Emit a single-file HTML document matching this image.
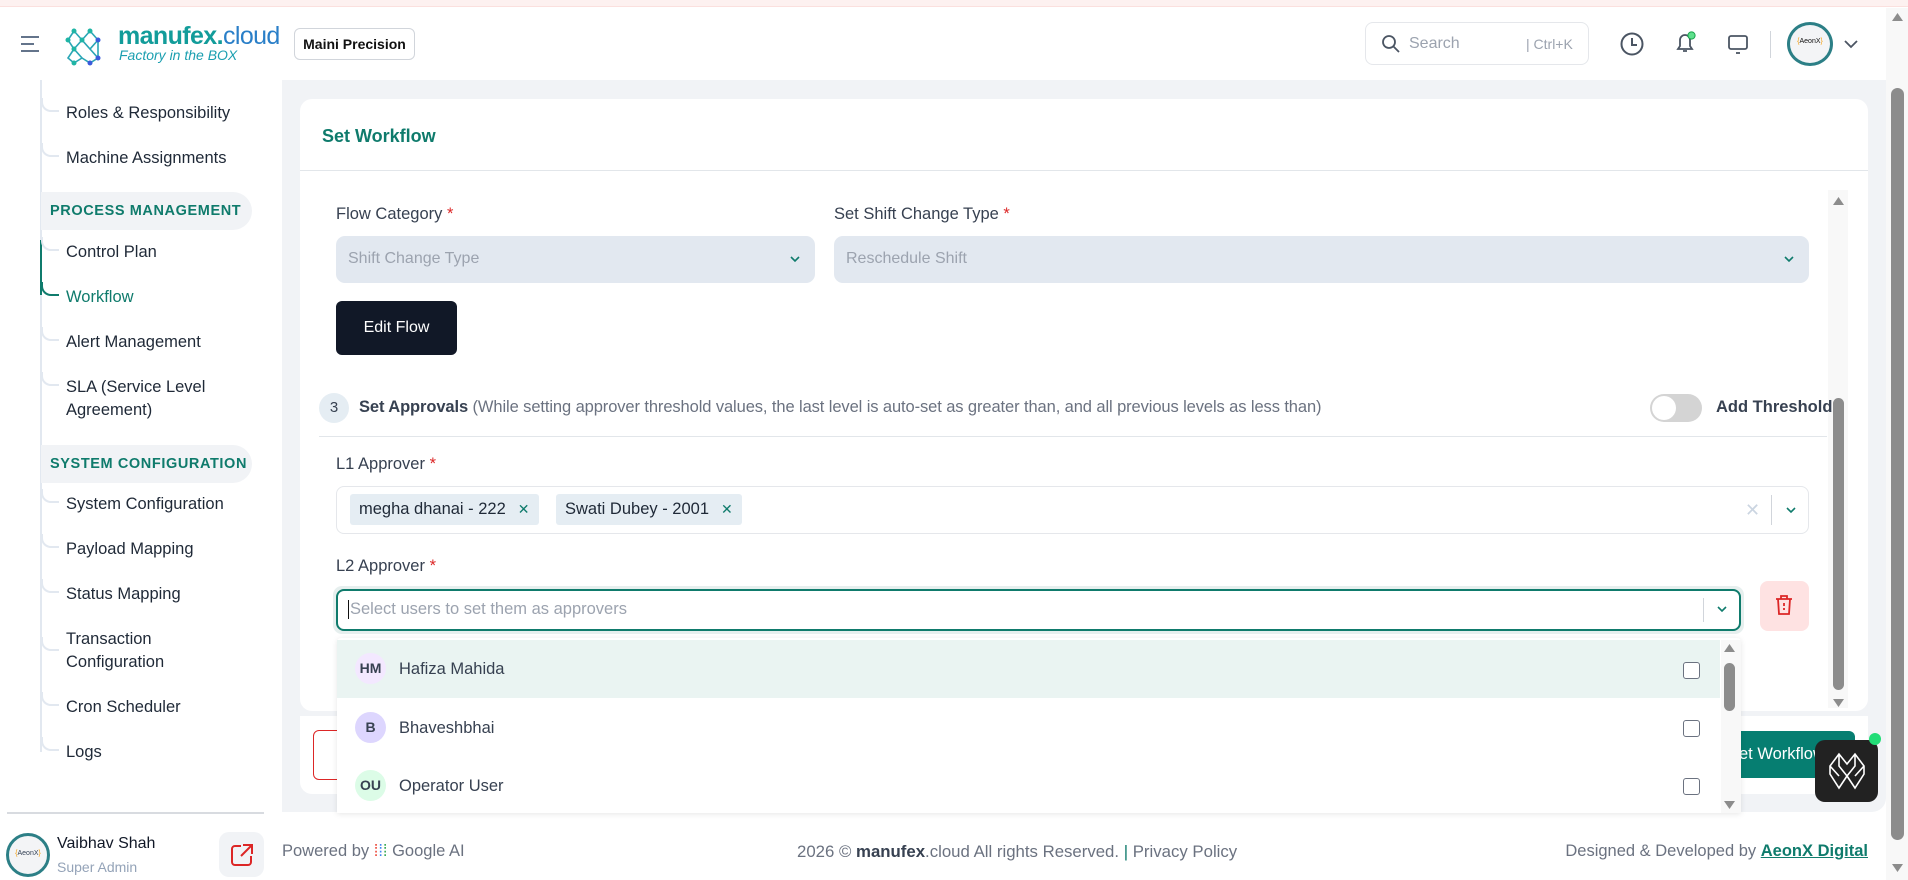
<!DOCTYPE html>
<html><head><meta charset="utf-8"><style>
*{box-sizing:border-box;margin:0;padding:0}
body{width:1908px;height:880px;overflow:hidden;background:#fff;font-family:"Liberation Sans",sans-serif;color:#334155;position:relative}
.a{position:absolute}
.sb a{position:absolute;left:66px;font-size:16.5px;color:#1f2937;line-height:23px;white-space:nowrap}
.tick{position:absolute;left:41px;width:18px;height:14px;border-left:2px solid #e2e8f0;border-bottom:2px solid #e2e8f0;border-bottom-left-radius:10px}
.pill{position:absolute;left:41px;width:211px;height:38px;background:#f1f3f6;border-radius:0 19px 19px 0;color:#0f7b6c;font-weight:bold;font-size:14.5px;letter-spacing:.6px;padding:11px 0 0 9px}
.lbl{position:absolute;font-size:16.5px;color:#374151}
.lbl b{color:#dc2626;font-weight:normal}
.sel{position:absolute;background:#e2e8f0;border-radius:9px;font-size:16px;color:#9ca3af;padding:14px 12px}
.chip{position:absolute;top:494px;height:31px;background:#e5edf3;border-radius:3px;font-size:16.5px;color:#1f2937;padding:6px 9px}
.chip span{color:#0f7b6c;margin-left:12px;font-size:14px}
.av{position:absolute;left:355px;width:31px;height:31px;border-radius:50%;font-size:14px;font-weight:bold;color:#374151;text-align:center;line-height:31px}
.nm{position:absolute;left:399px;font-size:16.5px;color:#374151}
.cb{position:absolute;left:1683px;width:17px;height:17px;border:1.5px solid #6b7280;border-radius:3px;background:#fff}
</style></head><body>
<div class="a" style="left:0;top:0;width:1908px;height:7px;background:#fdf1f0;border-bottom:1px solid #fbe0de"></div>
<svg class="a" style="left:20px;top:35px" width="20" height="18"><path d="M1 2h18M1 9h13M1 16h18" stroke="#64748b" stroke-width="2"/></svg>
<svg class="a" style="left:64px;top:26px" width="56" height="40"><g stroke="#2aa6b5" stroke-width="1.6" fill="none"><path d="M10 5L4 14L10 23L4 32L10 37M10 5L18 14L10 23L18 32L10 37M26 5L18 14L26 23L34 14L26 5M26 23L34 32L26 37L18 32M34 14V32"/></g><g fill="#1fb5a5"><circle cx="10" cy="5" r="2.5"/><circle cx="4" cy="14" r="2.5"/><circle cx="18" cy="14" r="2.5"/><circle cx="10" cy="23" r="2.5"/><circle cx="26" cy="5" r="2.5"/><circle cx="34" cy="14" r="2.5" fill="#3b5bdb"/><circle cx="26" cy="37" r="2.5" fill="#3b5bdb"/><circle cx="10" cy="37" r="2.5"/><circle cx="34" cy="32" r="2.5" fill="#3b5bdb"/></g></svg>
<div class="a" style="left:118px;top:22px;font-size:25px;color:#129c9a;font-weight:bold;letter-spacing:-.6px">manufex.<span style="font-weight:normal;color:#2a7fc8">cloud</span></div>
<div class="a" style="left:119px;top:47px;font-size:14px;color:#1b9fb0;font-style:italic">Factory in the BOX</div>
<div class="a" style="left:294px;top:28px;width:121px;height:32px;border:1px solid #d1d5db;border-radius:6px;font-size:14px;font-weight:bold;color:#111;text-align:center;line-height:30px">Maini Precision</div>
<div class="a" style="left:1365px;top:22px;width:224px;height:43px;border:1px solid #e5e7eb;border-radius:8px"></div>
<svg class="a" style="left:1381px;top:34px" width="20" height="20"><circle cx="8" cy="8" r="6" stroke="#4b5563" stroke-width="1.8" fill="none"/><path d="M12.5 12.5L18 18" stroke="#4b5563" stroke-width="1.8"/></svg>
<div class="a" style="left:1409px;top:35px;font-size:16px;color:#9ca3af">Search</div>
<div class="a" style="left:1526px;top:36px;font-size:14px;color:#9ca3af">| Ctrl+K</div>
<svg class="a" style="left:1619px;top:31px" width="26" height="26"><circle cx="13" cy="13" r="10.5" stroke="#4b5563" stroke-width="2" fill="none"/><path d="M13 7v7h5" stroke="#4b5563" stroke-width="2" fill="none"/></svg>
<svg class="a" style="left:1672px;top:30px" width="26" height="26"><path d="M6 19h14l-2-3v-6a5 5 0 0 0-10 0v6z M11 21h4" stroke="#4b5563" stroke-width="1.8" fill="none"/><circle cx="19.5" cy="5.5" r="3.6" fill="#5ee08c" stroke="#16a34a" stroke-width="1"/></svg>
<svg class="a" style="left:1726px;top:32px" width="24" height="24"><rect x="3" y="4" width="18" height="13" rx="2" stroke="#4b5563" stroke-width="1.8" fill="none"/><path d="M10 21h4" stroke="#4b5563" stroke-width="1.8"/></svg>
<div class="a" style="left:1770px;top:31px;width:1px;height:27px;background:#d1d5db"></div>
<div class="a" style="left:1787px;top:22px;width:46px;height:44px;border:3px solid #2c7f86;border-radius:50%;background:#f3f4f6;font-size:7px;text-align:center;line-height:34px;color:#111"><span style="color:#f59e0b">{</span>AeonX<span style="color:#f59e0b">}</span></div>
<svg class="a" style="left:1843px;top:38px" width="16" height="12"><path d="M2 3l6 6 6-6" stroke="#4b5563" stroke-width="1.8" fill="none"/></svg>
<div class="a" style="left:1886px;top:8px;width:22px;height:872px;background:#f8f8f8"></div>
<div class="a" style="left:1891px;top:88px;width:13px;height:752px;background:#8c8c8c;border-radius:7px"></div>
<svg class="a" style="left:1891px;top:12px" width="13" height="10"><path d="M6.5 1L12 9H1z" fill="#8c8c8c"/></svg>
<svg class="a" style="left:1891px;top:863px" width="13" height="10"><path d="M1 1h11L6.5 9z" fill="#8c8c8c"/></svg>
<div class="sb">
<div class="a" style="left:40px;top:80px;width:2px;height:672px;background:#e2e8f0"></div>
<div class="a" style="left:40px;top:240px;width:2px;height:55px;background:#0f7b6c"></div>
<div class="tick" style="top:98px"></div><a style="top:102px">Roles &amp; Responsibility</a>
<div class="tick" style="top:143px"></div><a style="top:147px">Machine Assignments</a>
<div class="pill" style="top:192px">PROCESS MANAGEMENT</div>
<div class="tick" style="top:237px"></div><a style="top:241px">Control Plan</a>
<div class="tick" style="top:282px;border-color:#0f7b6c"></div><a style="top:286px;color:#0f7b6c">Workflow</a>
<div class="tick" style="top:327px"></div><a style="top:331px">Alert Management</a>
<div class="tick" style="top:372px"></div><a style="top:376px">SLA (Service Level<br>Agreement)</a>
<div class="pill" style="top:445px">SYSTEM CONFIGURATION</div>
<div class="tick" style="top:489px"></div><a style="top:493px">System Configuration</a>
<div class="tick" style="top:534px"></div><a style="top:538px">Payload Mapping</a>
<div class="tick" style="top:579px"></div><a style="top:583px">Status Mapping</a>
<div class="tick" style="top:637px"></div><a style="top:628px">Transaction<br>Configuration</a>
<div class="tick" style="top:692px"></div><a style="top:696px">Cron Scheduler</a>
<div class="tick" style="top:737px"></div><a style="top:741px">Logs</a>
</div>
<div class="a" style="left:7px;top:812px;width:257px;height:2px;background:#d8dbe0"></div>
<div class="a" style="left:6px;top:833px;width:44px;height:44px;border:3px solid #2c7f86;border-radius:50%;background:#f3f4f6;font-size:7px;text-align:center;line-height:36px"><span style="color:#f59e0b">{</span>AeonX<span style="color:#f59e0b">}</span></div>
<div class="a" style="left:57px;top:835px;font-size:16px;color:#111827">Vaibhav Shah</div>
<div class="a" style="left:57px;top:859px;font-size:14px;color:#94a3b8">Super Admin</div>
<div class="a" style="left:219px;top:832px;width:45px;height:45px;background:#f1f3f6;border-radius:10px"></div>
<svg class="a" style="left:229px;top:842px" width="26" height="26"><path d="M12 4H6a3 3 0 0 0-3 3v13a3 3 0 0 0 3 3h13a3 3 0 0 0 3-3v-6M14 3h9v9M23 3L12 14" stroke="#dc2626" stroke-width="2" fill="none"/></svg>
<div class="a" style="left:282px;top:80px;width:1604px;height:732px;background:#f1f3f6;border-bottom-right-radius:14px"></div>
<div class="a" style="left:300px;top:99px;width:1568px;height:612px;background:#fff;border-radius:12px"></div>
<div class="a" style="left:322px;top:126px;font-size:18px;font-weight:bold;color:#0f7b6c">Set Workflow</div>
<div class="a" style="left:300px;top:170px;width:1568px;height:1px;background:#e2e6ea"></div>
<div class="a" style="left:1828px;top:190px;width:20px;height:518px;background:#f8f8f8"></div>
<svg class="a" style="left:1832px;top:196px" width="13" height="10"><path d="M6.5 1L12 9H1z" fill="#8c8c8c"/></svg>
<div class="a" style="left:1833px;top:398px;width:11px;height:292px;background:#8c8c8c;border-radius:6px"></div>
<svg class="a" style="left:1832px;top:698px" width="13" height="10"><path d="M1 1h11L6.5 9z" fill="#8c8c8c"/></svg>
<div class="lbl" style="left:336px;top:205px">Flow Category <b>*</b></div>
<div class="lbl" style="left:834px;top:205px">Set Shift Change Type <b>*</b></div>
<div class="sel" style="left:336px;top:236px;width:479px;height:47px">Shift Change Type</div>
<div class="sel" style="left:834px;top:236px;width:975px;height:47px">Reschedule Shift</div>
<svg class="a" style="left:789px;top:254px" width="12" height="10"><path d="M2 3l4 4 4-4" stroke="#0f7b6c" stroke-width="1.6" fill="none"/></svg>
<svg class="a" style="left:1783px;top:254px" width="12" height="10"><path d="M2 3l4 4 4-4" stroke="#0f7b6c" stroke-width="1.6" fill="none"/></svg>
<div class="a" style="left:336px;top:301px;width:121px;height:54px;background:#111827;border-radius:6px;color:#fff;font-size:16px;text-align:center;line-height:54px">Edit Flow</div>
<div class="a" style="left:319px;top:393px;width:30px;height:30px;border-radius:50%;background:#e5edf3;font-size:15px;text-align:center;line-height:30px;color:#374151">3</div>
<div class="a" style="left:359px;top:398px;font-size:16.5px;color:#6b7280;white-space:nowrap;letter-spacing:-.1px"><b style="color:#374151">Set Approvals</b> (While setting approver threshold values, the last level is auto-set as greater than, and all previous levels as less than)</div>
<div class="a" style="left:1650px;top:394px;width:52px;height:28px;border-radius:14px;background:#d4d4d4"><div style="margin:2px;width:24px;height:24px;border-radius:50%;background:#fff"></div></div>
<div class="a" style="left:1716px;top:398px;font-size:16.5px;font-weight:bold;color:#374151">Add Threshold</div>
<div class="a" style="left:319px;top:436px;width:1508px;height:1px;background:#e2e6ea"></div>
<div class="lbl" style="left:336px;top:455px">L1 Approver <b>*</b></div>
<div class="a" style="left:336px;top:486px;width:1473px;height:48px;border:1px solid #e5e7eb;border-radius:8px"></div>
<div class="chip" style="left:350px">megha dhanai - 222<span>✕</span></div>
<div class="chip" style="left:556px">Swati Dubey - 2001<span>✕</span></div>
<div class="a" style="left:1745px;top:500px;font-size:18px;color:#cbd5e1">✕</div>
<div class="a" style="left:1771px;top:495px;width:1px;height:30px;background:#d1d5db"></div>
<svg class="a" style="left:1785px;top:505px" width="12" height="10"><path d="M2 3l4 4 4-4" stroke="#0f7b6c" stroke-width="1.6" fill="none"/></svg>
<div class="lbl" style="left:336px;top:557px">L2 Approver <b>*</b></div>
<div class="a" style="left:333px;top:586px;width:1411px;height:48px;border-radius:9px;background:#e6efee"></div>
<div class="a" style="left:336px;top:589px;width:1405px;height:42px;border:2px solid #0f7b6c;border-radius:8px;background:#fff"></div>
<div class="a" style="left:348px;top:600px;font-size:16.5px;color:#9ca3af;border-left:1px solid #111;padding-left:1px">Select users to set them as approvers</div>
<div class="a" style="left:1703px;top:598px;width:1px;height:24px;background:#d1d5db"></div>
<svg class="a" style="left:1716px;top:604px" width="12" height="10"><path d="M2 3l4 4 4-4" stroke="#0f7b6c" stroke-width="1.6" fill="none"/></svg>
<div class="a" style="left:1760px;top:581px;width:49px;height:50px;background:#fee2e2;border-radius:8px"></div>
<svg class="a" style="left:1774px;top:594px" width="20" height="22"><path d="M2 5h16M7 5V2h6v3M4 5l1 15h10l1-15M10 9v3M10 14v2" stroke="#dc2626" stroke-width="1.8" fill="none"/></svg>
<div class="a" style="left:300px;top:716px;width:1568px;height:78px;background:#fff;border-radius:0 0 12px 12px"></div>
<div class="a" style="left:313px;top:730px;width:60px;height:50px;border:1px solid #dc2626;border-radius:6px"></div>
<div class="a" style="left:1680px;top:731px;width:175px;height:47px;background:#067e71;border-radius:6px;color:#fff;font-size:16.5px;padding:14px 0 0 48px">Set Workflow</div>
<div class="a" style="left:337px;top:638px;width:1404px;height:175px;background:#fff;box-shadow:0 1px 6px rgba(0,0,0,.1);border-radius:4px 4px 0 0"></div>
<div class="a" style="left:337px;top:640px;width:1383px;height:58px;background:#eaf4f2"></div>
<div class="av" style="top:653px;background:#f3e8ff">HM</div><div class="nm" style="top:660px">Hafiza Mahida</div><div class="cb" style="top:662px"></div>
<div class="av" style="top:712px;background:#ddd6fe">B</div><div class="nm" style="top:719px">Bhaveshbhai</div><div class="cb" style="top:720px"></div>
<div class="av" style="top:770px;background:#dcfce7">OU</div><div class="nm" style="top:777px">Operator User</div><div class="cb" style="top:778px"></div>
<div class="a" style="left:1721px;top:640px;width:20px;height:173px;background:#f8f8f8"></div>
<svg class="a" style="left:1723px;top:643px" width="13" height="10"><path d="M6.5 1L12 9H1z" fill="#8c8c8c"/></svg>
<div class="a" style="left:1724px;top:663px;width:11px;height:48px;background:#8c8c8c;border-radius:6px"></div>
<svg class="a" style="left:1723px;top:800px" width="13" height="10"><path d="M1 1h11L6.5 9z" fill="#8c8c8c"/></svg>
<div class="a" style="left:1815px;top:740px;width:63px;height:62px;background:#222;border-radius:10px"></div>
<svg class="a" style="left:1827px;top:750px" width="40" height="42"><path d="M12 4L3 16v8l9 14 8-12 8 12 9-14v-8L28 4 20 14zM12 4v12l8 10M28 4v12l-8 10M3 16l9 10M37 16l-9 10" stroke="#fff" stroke-width="1.6" fill="none"/></svg>
<div class="a" style="left:1869px;top:733px;width:12px;height:12px;border-radius:50%;background:#22dd77"></div>
<div class="a" style="left:282px;top:842px;font-size:16.5px;color:#6b7280">Powered by <span style="color:#ea4335">⁞</span><span style="color:#4285f4">⁞</span><span style="color:#34a853">⁞</span> Google AI</div>
<div class="a" style="left:797px;top:842px;font-size:16.8px;color:#6b7280">2026 © <b style="color:#374151">manufex</b>.cloud All rights Reserved. <span style="color:#0f7b6c">|</span> Privacy Policy</div>
<div class="a" style="right:40px;top:842px;font-size:16.5px;color:#6b7280">Designed &amp; Developed by <b style="color:#0f7b6c;text-decoration:underline">AeonX Digital</b></div>
</body></html>
